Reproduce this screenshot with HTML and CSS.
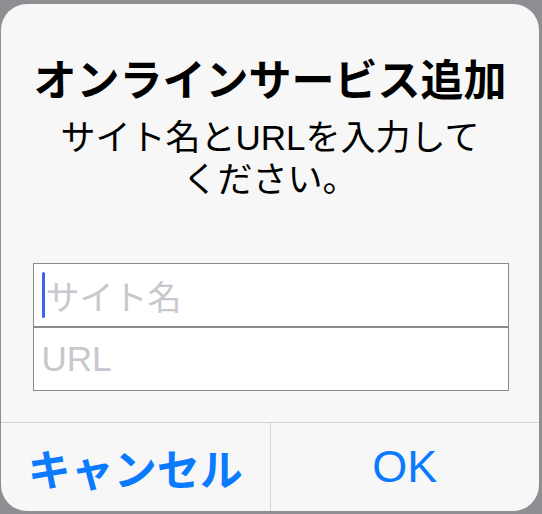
FILE: index.html
```html
<!DOCTYPE html>
<html lang="ja">
<head>
<meta charset="utf-8">
<title>オンラインサービス追加</title>
<link rel="stylesheet" href="styles.css">
</head>
<body>
<div class="alert">
  <div class="content">
    <h1 class="title">オンラインサービス追加</h1>
    <p class="message">サイト名とURLを入力して<br>ください。</p>
    <div class="fields">
      <div class="field"><span class="caret"></span><span class="placeholder">サイト名</span></div>
      <div class="field"><span class="placeholder latin">URL</span></div>
    </div>
  </div>
  <div class="actions">
    <div class="btn btn-cancel">キャンセル</div>
    <div class="btn btn-ok">OK</div>
  </div>
</div>
</body>
</html>
```
FILE: styles.css
```css
html, body {
  margin: 0;
  padding: 0;
  background: #8e8e93;
  width: 542px;
  height: 514px;
  overflow: hidden;
}
body {
  font-family: "Liberation Sans", "Noto Sans CJK JP", sans-serif;
}
.alert {
  margin: 4px 0 0 1px;
  width: 538px;
  height: 507px;
  background: #f7f7f7;
  border-radius: 26px;
  display: flex;
  flex-direction: column;
  overflow: hidden;
}
.content {
  flex: 1;
  display: flex;
  flex-direction: column;
  align-items: center;
  padding-top: 52px;
}
.title {
  margin: 0;
  font-size: 43px;
  line-height: 50px;
  font-weight: bold;
  color: #000;
  text-align: center;
  white-space: nowrap;
}
.message {
  margin: 11px 0 0;
  width: 470px;
  font-size: 35px;
  line-height: 42px;
  color: #000;
  text-align: center;
  white-space: nowrap;
}
.fields {
  margin-top: 62px;
  width: 476px;
  display: flex;
  flex-direction: column;
  margin-left: 1px;
}
.field {
  height: 62px;
  border: 1px solid #8a8a8e;
  background: #fff;
  display: flex;
  align-items: center;
  padding-left: 8px;
}
.caret {
  width: 3px;
  height: 46px;
  border-radius: 2px;
  background: #3d63f2;
  margin-right: 1px;
}
.placeholder {
  font-size: 34px;
  color: #c7c7cd;
}
.placeholder.latin {
  font-size: 35px;
}
.actions {
  height: 88px;
  border-top: 1px solid #d4d4d6;
  display: flex;
}
.btn {
  flex: 1;
  display: flex;
  align-items: center;
  justify-content: center;
  color: #0a7aff;
  font-size: 43px;
}
.btn-cancel {
  font-weight: bold;
  border-right: 1px solid #d4d4d6;
}
.btn-ok {
  font-size: 45px;
}
```
